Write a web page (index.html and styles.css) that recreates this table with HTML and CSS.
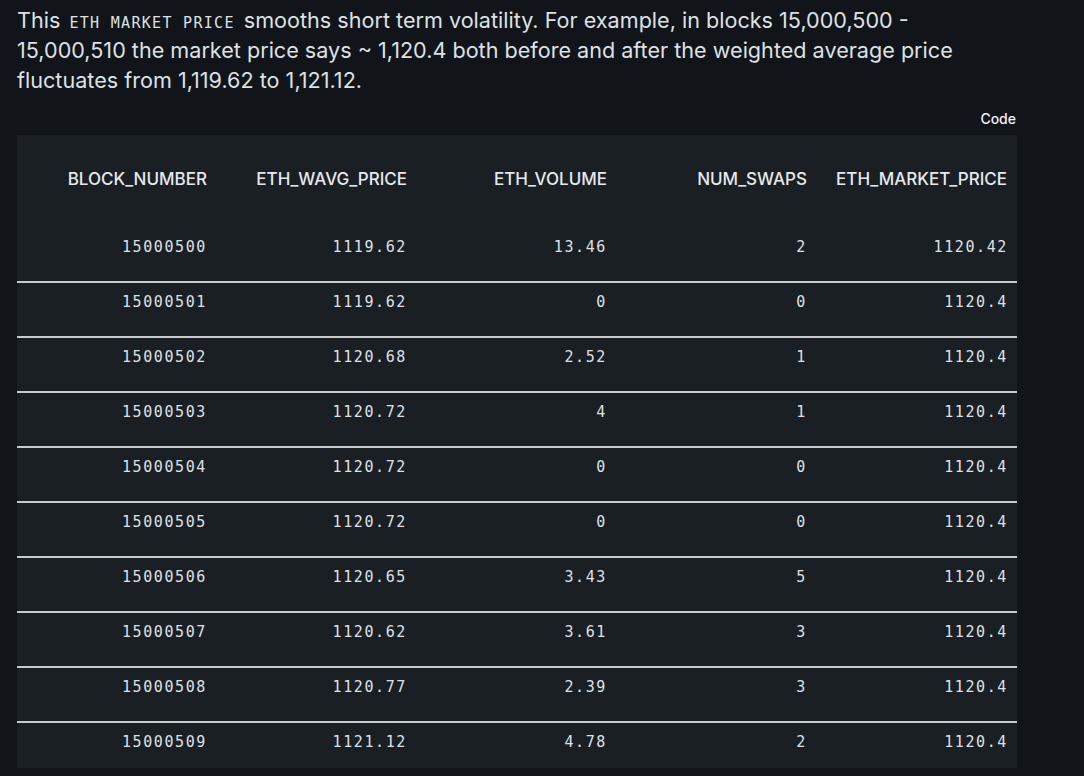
FILE: index.html
```html
<!DOCTYPE html>
<html lang="en">
<head>
<meta charset="utf-8">
<title>ETH market price</title>
<link rel="stylesheet" href="styles.css">
</head>
<body>
<main class="page">
  <p class="intro">This <code class="inline-code">ETH MARKET PRICE</code> smooths short term volatility. For example, in blocks 15,000,500 - 15,000,510 the market price says ~ 1,120.4 both before and after the weighted average price fluctuates from 1,119.62 to 1,121.12.</p>
  <div class="code-toggle"><span class="code-label">Code</span></div>
  <table class="data-table">
    <thead>
      <tr>
        <th>BLOCK_NUMBER</th>
        <th>ETH_WAVG_PRICE</th>
        <th>ETH_VOLUME</th>
        <th>NUM_SWAPS</th>
        <th>ETH_MARKET_PRICE</th>
      </tr>
    </thead>
    <tbody>
      <tr><td>15000500</td><td>1119.62</td><td>13.46</td><td>2</td><td>1120.42</td></tr>
      <tr><td>15000501</td><td>1119.62</td><td>0</td><td>0</td><td>1120.4</td></tr>
      <tr><td>15000502</td><td>1120.68</td><td>2.52</td><td>1</td><td>1120.4</td></tr>
      <tr><td>15000503</td><td>1120.72</td><td>4</td><td>1</td><td>1120.4</td></tr>
      <tr><td>15000504</td><td>1120.72</td><td>0</td><td>0</td><td>1120.4</td></tr>
      <tr><td>15000505</td><td>1120.72</td><td>0</td><td>0</td><td>1120.4</td></tr>
      <tr><td>15000506</td><td>1120.65</td><td>3.43</td><td>5</td><td>1120.4</td></tr>
      <tr><td>15000507</td><td>1120.62</td><td>3.61</td><td>3</td><td>1120.4</td></tr>
      <tr><td>15000508</td><td>1120.77</td><td>2.39</td><td>3</td><td>1120.4</td></tr>
      <tr><td>15000509</td><td>1121.12</td><td>4.78</td><td>2</td><td>1120.4</td></tr>
    </tbody>
  </table>
</main>
</body>
</html>
```
FILE: styles.css
```css
html, body {
  margin: 0;
  padding: 0;
  background: #111418;
}

body {
  font-family: Inter, "Noto Sans", sans-serif;
  color: #e1e4e8;
}

.page {
  width: 1000px;
  padding: 5px 17px 0 17px;
  display: flex;
  flex-direction: column;
}

.intro {
  margin: 0;
  max-width: 965px;
  font-size: 21.6px;
  line-height: 30px;
  color: #dde1e5;
}

.inline-code {
  font-family: "DejaVu Sans Mono", monospace;
  font-size: 15px;
  line-height: 1;
  letter-spacing: 1.3px;
  padding: 0 3px;
  color: #dde1e5;
}

.code-toggle {
  display: flex;
  justify-content: flex-end;
  padding: 14px 1px 0 0;
  height: 40px;
  box-sizing: border-box;
}

.code-label {
  font-size: 14px;
  font-weight: 500;
  line-height: 20px;
  color: #f0f2f4;
}

.data-table {
  width: 1000px;
  border-collapse: collapse;
  table-layout: fixed;
  background: #1a1f24;
}

.data-table th,
.data-table td {
  text-align: right;
  padding-left: 0;
  padding-right: 10px;
  line-height: 20px;
}

.data-table th {
  font-family: Inter, "Noto Sans", sans-serif;
  font-size: 17px;
  font-weight: 500;
  color: #e6e9ec;
  padding-top: 34px;
  padding-bottom: 37px;
}

.data-table td {
  font-family: "DejaVu Sans Mono", monospace;
  font-size: 15px;
  letter-spacing: 1.6px;
  color: #dde1e5;
  padding-top: 9px;
  padding-bottom: 24px;
}

.data-table td:last-child {
  padding-right: 9px;
}

.data-table tbody tr + tr {
  border-top: 2px solid #c6cacd;
}

.data-table tbody tr:first-child td {
  padding-top: 11px;
}

.data-table tbody tr:last-child td {
  padding-bottom: 16px;
}
```
